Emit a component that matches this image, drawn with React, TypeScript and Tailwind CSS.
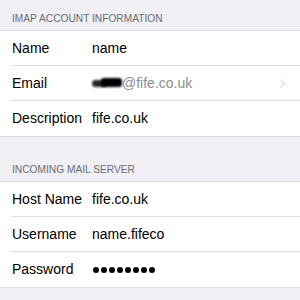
import { ChevronRight } from "lucide-react";

type Row = { label: string; value?: string; kind?: "email" | "password" };

const imapRows: Row[] = [
  { label: "Name", value: "name" },
  { label: "Email", kind: "email" },
  { label: "Description", value: "fife.co.uk" },
];

const incomingRows: Row[] = [
  { label: "Host Name", value: "fife.co.uk" },
  { label: "Username", value: "name.fifeco" },
  { label: "Password", kind: "password" },
];

function Value({ row }: { row: Row }) {
  if (row.kind === "email") {
    return (
      <div className="flex items-center flex-1">
        <div className="relative w-[30px] h-[10px]">
          <div className="absolute left-[0px] top-[2px] w-[15px] h-[7px] bg-black/85 rounded-full blur-[1px]" />
          <div className="absolute left-[9px] top-[0px] w-[21px] h-[9px] bg-black rounded-[3px] blur-[0.8px]" />
        </div>
        <span className="text-[#8e8e93]">@fife.co.uk</span>
        <ChevronRight className="ml-auto mr-[10px] w-[15px] h-[15px] text-[#c7c7cc]" strokeWidth={1.5} />
      </div>
    );
  }
  if (row.kind === "password") {
    return (
      <div className="flex items-center gap-[2px] pl-[1px]">
        {Array.from({ length: 8 }).map((_, i) => (
          <div key={i} className="w-[6px] h-[6px] rounded-full bg-black" />
        ))}
      </div>
    );
  }
  return <span className="text-black">{row.value}</span>;
}

function Section({ rows }: { rows: Row[] }) {
  return (
    <div className="bg-white border-y border-[#dcdce0]">
      {rows.map((row, i) => (
        <div key={row.label} className="flex pl-[12px]">
          <div
            className={
              "flex items-center flex-1 h-[35px] " + (i < rows.length - 1 ? "border-b border-[#dcdce0]" : "")
            }
          >
            <span className="w-[80px] text-black shrink-0">{row.label}</span>
            <Value row={row} />
          </div>
        </div>
      ))}
    </div>
  );
}

export default function App() {
  return (
    <div
      className="w-[300px] h-[300px] bg-[#efeff4] overflow-hidden text-[14px]"
      style={{ fontFamily: '"Liberation Sans", Arial, sans-serif' }}
    >
      <div className="h-[30px] flex items-end pb-[5px] pl-[12px] text-[10.2px] leading-[12px] text-[#6d6d72]">
        IMAP ACCOUNT INFORMATION
      </div>
      <Section rows={imapRows} />
      <div className="h-[44px] flex items-end pb-[5px] pl-[12px] text-[10.2px] leading-[12px] text-[#6d6d72]">
        INCOMING MAIL SERVER
      </div>
      <Section rows={incomingRows} />
    </div>
  );
}
